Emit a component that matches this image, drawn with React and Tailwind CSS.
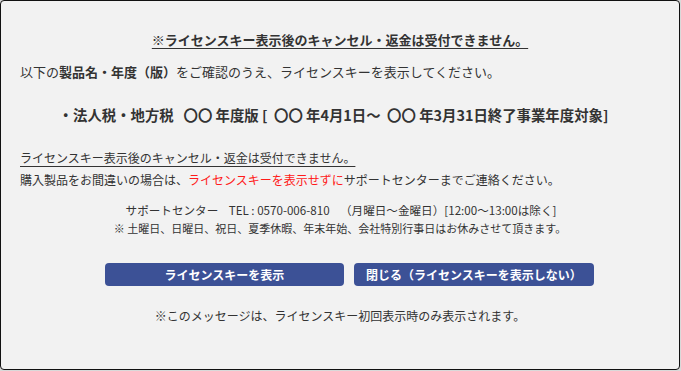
export default function App() {
  const font = { fontFamily: '"Noto Sans CJK JP", "Noto Sans", sans-serif' };
  return (
    <div className="w-[681px] h-[371px] bg-[#d9d9d9]" style={font}>
      <div className="w-[680px] h-[370px] border border-[#111] rounded-[4px] bg-[#f2f2f2] text-[#333] pt-[29px]">
        <div className="text-center text-[13px] leading-[20px] font-bold underline underline-offset-[3px]">
          ※ライセンスキー表示後のキャンセル・返金は受付できません。
        </div>
        <div className="mt-[12px] pl-[19px] text-[13px] leading-[20px]">
          以下の<span className="font-bold">製品名・年度（版）</span>をご確認のうえ、ライセンスキーを表示してください。
        </div>
        <div className="mt-[23px] text-center text-[14.4px] leading-[20px] font-bold pr-[13px]">
          ・法人税・地方税&nbsp;&nbsp;&nbsp;〇〇 年度版 [&nbsp;&nbsp;〇〇 年4月1日～&nbsp;&nbsp;〇〇 年3月31日終了事業年度対象]
        </div>
        <div className="mt-[22px] pl-[19px] text-[12px] leading-[22px]">
          <div className="underline underline-offset-[3px]">ライセンスキー表示後のキャンセル・返金は受付できません。</div>
          <div>
            購入製品をお間違いの場合は、<span className="text-[#ff1a1a]">ライセンスキーを表示せずに</span>サポートセンターまでご連絡ください。
          </div>
        </div>
        <div className="mt-[10px] text-center text-[11px] leading-[18px]">
          <div className="text-[11.6px] pl-[2px]">サポートセンター&nbsp;&nbsp;&nbsp;&nbsp;TEL : 0570-006-810&nbsp;&nbsp;&nbsp;&nbsp;（月曜日～金曜日）[12:00～13:00は除く]</div>
          <div>※ 土曜日、日曜日、祝日、夏季休暇、年末年始、会社特別行事日はお休みさせて頂きます。</div>
        </div>
        <div className="mt-[26px] flex gap-[10px] pl-[104px]">
          <button className="w-[239px] h-[23px] rounded-[4px] bg-[#3c5196] text-white text-[12px] font-bold leading-[23px]">
            ライセンスキーを表示
          </button>
          <button className="w-[240px] h-[23px] rounded-[4px] bg-[#3c5196] text-white text-[12px] font-bold leading-[23px]">
            閉じる（ライセンスキーを表示しない）
          </button>
        </div>
        <div className="mt-[21px] text-center text-[12px] leading-[18px]">
          ※このメッセージは、ライセンスキー初回表示時のみ表示されます。
        </div>
      </div>
    </div>
  );
}
